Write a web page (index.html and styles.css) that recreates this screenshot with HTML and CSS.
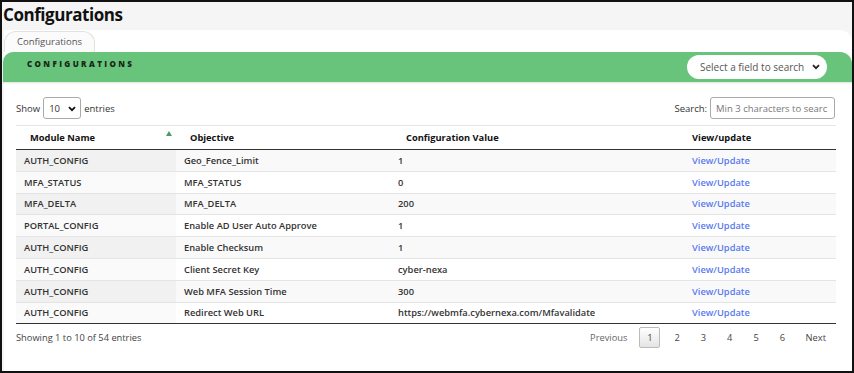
FILE: index.html
```html
<!DOCTYPE html>
<html>
<head>
<meta charset="utf-8">
<link rel="stylesheet" href="styles.css">
</head>
<body>
<div class="frame">
  <h1 class="title">Configurations</h1>
  <div class="panel">
    <div class="tabs"><div class="tab">Configurations</div></div>
    <div class="bar">
      <div class="bar-title">CONFIGURATIONS</div>
      <div class="pill">Select a field to search
        <svg class="chev" width="8" height="6" viewBox="0 0 8 6"><path d="M1 1.2 L4 4.2 L7 1.2" fill="none" stroke="#222" stroke-width="1.8"/></svg>
      </div>
    </div>
    <div class="content">
      <div class="controls">
        <div class="show">Show
          <div class="len">10
            <svg class="chev" width="8" height="6" viewBox="0 0 8 6"><path d="M1 1.2 L4 4.2 L7 1.2" fill="none" stroke="#111" stroke-width="1.8"/></svg>
          </div>
          entries</div>
        <div class="search">Search:<div class="search-input">Min 3 characters to searc</div></div>
      </div>
      <table class="grid">
        <thead>
          <tr><th class="c1 sorted">Module Name<span class="sort"></span></th><th class="c2">Objective</th><th class="c3">Configuration Value</th><th class="c4">View/update</th></tr>
        </thead>
        <tbody>
          <tr><td>AUTH_CONFIG</td><td>Geo_Fence_Limit</td><td>1</td><td><a>View/Update</a></td></tr>
          <tr><td>MFA_STATUS</td><td>MFA_STATUS</td><td>0</td><td><a>View/Update</a></td></tr>
          <tr><td>MFA_DELTA</td><td>MFA_DELTA</td><td>200</td><td><a>View/Update</a></td></tr>
          <tr><td>PORTAL_CONFIG</td><td>Enable AD User Auto Approve</td><td>1</td><td><a>View/Update</a></td></tr>
          <tr><td>AUTH_CONFIG</td><td>Enable Checksum</td><td>1</td><td><a>View/Update</a></td></tr>
          <tr><td>AUTH_CONFIG</td><td>Client Secret Key</td><td>cyber-nexa</td><td><a>View/Update</a></td></tr>
          <tr><td>AUTH_CONFIG</td><td>Web MFA Session Time</td><td>300</td><td><a>View/Update</a></td></tr>
          <tr><td>AUTH_CONFIG</td><td>Redirect Web URL</td><td>https://webmfa.cybernexa.com/Mfavalidate</td><td><a>View/Update</a></td></tr>
        </tbody>
      </table>
      <div class="footer">
        <div class="info">Showing 1 to 10 of 54 entries</div>
        <div class="pager">
          <span class="pg prev">Previous</span>
          <span class="pg cur">1</span>
          <span class="pg num">2</span>
          <span class="pg num">3</span>
          <span class="pg num">4</span>
          <span class="pg num">5</span>
          <span class="pg num">6</span>
          <span class="pg next">Next</span>
        </div>
      </div>
    </div>
  </div>
</div>
</body>
</html>
```

FILE: styles.css
```css
* { box-sizing: border-box; }
html, body { margin: 0; padding: 0; }
body {
  font-family: "Open Sans", "Liberation Sans", sans-serif;
  color: #222;
  background: #fff;
}
.frame {
  width: 854px;
  height: 373px;
  border: 2px solid #111;
  background: #f5f5f5;
  display: flex;
  flex-direction: column;
  overflow: hidden;
}
.title {
  margin: 0;
  font-size: 17px;
  font-weight: 700;
  line-height: 24px;
  padding: 1px 0 3px 1px;
  color: #111;
  letter-spacing: -0.45px;
}
.panel {
  flex: 1;
  margin: 0 0 0 2px;
  background: #fff;
  border-radius: 0 12px 0 0;
  display: flex;
  flex-direction: column;
}
.tabs { height: 22px; display: flex; padding-top: 1px; }
.tab {
  width: 91px;
  border: 1px solid #e2e2e2;
  border-bottom: none;
  border-radius: 12px 12px 0 0;
  background: #fbfbfb;
  font-size: 9.5px;
  color: #555;
  text-align: center;
  line-height: 19px;
}
.bar {
  height: 30px;
  margin-left: -1px;
  background: #67c47a;
  border-radius: 10px 12px 0 0;
  display: flex;
  align-items: flex-start;
  justify-content: space-between;
  padding: 0 25px 0 24px;
  box-shadow: 0 1px 2px rgba(0,0,0,0.12);
}
.bar-title {
  font-size: 8px;
  font-weight: 800;
  letter-spacing: 2.4px;
  color: #1a261c;
  padding-top: 6px;
}
.pill {
  margin-top: 3px;
  width: 140px;
  height: 24px;
  background: #fff;
  border-radius: 12px;
  font-size: 10px;
  color: #555;
  display: flex;
  align-items: center;
  padding-left: 13px;
  position: relative;
}
.pill .chev { position: absolute; right: 7px; top: 9px; }
.content { padding: 0 16px 0 12px; }
.controls {
  height: 43px;
  display: flex;
  justify-content: space-between;
  align-items: flex-end;
  padding-bottom: 6px;
  font-size: 9.5px;
  color: #333;
}
.show { display: flex; align-items: center; gap: 2px; }
.len {
  width: 38px;
  height: 22px;
  border: 1px solid #aaa;
  border-radius: 3px;
  margin: 0 1px;
  display: flex;
  align-items: center;
  padding-left: 5px;
  position: relative;
}
.len .chev { position: absolute; right: 4px; top: 8px; }
.search { display: flex; align-items: center; gap: 3px; margin-right: 1px; }
.search-input {
  width: 125px;
  height: 22px;
  border: 1px solid #aaa;
  border-radius: 3px;
  color: #777;
  padding-left: 5px;
  display: flex;
  align-items: center;
  overflow: hidden;
  white-space: nowrap;
}
.grid {
  width: 820px;
  border-collapse: collapse;
  font-size: 9.3px;
  border-top: 1px solid #e6e6e6;
  table-layout: fixed;
}
.grid th {
  text-align: left;
  font-weight: 700;
  height: 24px;
  padding: 0 8px;
  border-bottom: 1.5px solid #333;
  color: #111;
}
.grid th.c1 { width: 160px; position: relative; padding-left: 14px; }
.grid th.c2 { width: 214px; padding-left: 14px; }
.grid th.c3 { width: 294px; padding-left: 16px; }
.grid th.c4 { padding-left: 8px; }
.sort {
  position: absolute;
  right: 4px;
  top: 5px;
  width: 0; height: 0;
  border-left: 3px solid transparent;
  border-right: 3px solid transparent;
  border-bottom: 5px solid #4c9a5f;
}
.grid td {
  height: 21.8px;
  padding: 0 8px;
  font-weight: 600;
  color: #333;
  border-top: 1px solid #e4e4e4;
  white-space: nowrap;
}
.grid tbody tr:first-child td { border-top: none; }
.grid tbody tr:nth-child(odd) td { background: #f9f9f9; }
.grid tbody tr:nth-child(odd) td:first-child { background: #f1f1f1; }
.grid tbody tr:nth-child(even) td:first-child { background: #fafafa; }
.grid tbody tr:last-child td { border-bottom: 1.5px solid #333; }
.grid a { color: #5a7af0; font-weight: 600; }
.footer {
  display: flex;
  justify-content: space-between;
  align-items: flex-start;
  font-size: 9.3px;
  color: #444;
  padding-top: 3px;
}
.info { padding-top: 4px; }
.pager { display: flex; align-items: center; }
.pg { padding: 0 10px; line-height: 19px; color: #444; }
.pg.num { padding: 0 10.5px; }
.pg.prev { color: #666; }
.pg.cur {
  width: 21px;
  text-align: center;
  border: 1px solid #bbb;
  border-radius: 2px;
  background: linear-gradient(#fff, #e4e4e4);
  padding: 0;
  margin: 0 3.5px 0 2px;
}
```
